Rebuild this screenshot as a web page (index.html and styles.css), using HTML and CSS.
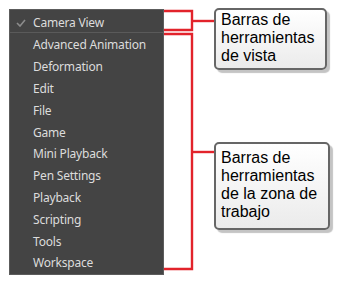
FILE: index.html
```html
<!DOCTYPE html>
<html lang="es">
<head>
  <meta charset="UTF-8">
  <title>Barras de herramientas</title>
  <link rel="stylesheet" href="styles.css">
</head>
<body>

<div class="figure">
  <div class="menu">
    <div class="item checked">
      <svg class="check" width="10" height="8" viewBox="0 0 10 8">
        <polyline points="1,4 4,7 9,1" />
      </svg>
      Camera View
    </div>
    <div class="item">Advanced Animation</div>
    <div class="item">Deformation</div>
    <div class="item">Edit</div>
    <div class="item">File</div>
    <div class="item">Game</div>
    <div class="item">Mini Playback</div>
    <div class="item">Pen Settings</div>
    <div class="item">Playback</div>
    <div class="item">Scripting</div>
    <div class="item">Tools</div>
    <div class="item">Workspace</div>
  </div>

  <!-- corchetes rojos entre el menú y las notas -->
  <svg class="links" width="50" height="270" viewBox="0 0 50 270">
    <path d="M0 3 H28 V22 H0" />
    <path d="M28 13 H50" />
    <path d="M0 26 H28 V261 H0" />
    <path d="M28 144 H50" />
  </svg>

  <div class="notes">
    <div class="note note-view">Barras de herramientas de vista</div>
    <div class="note note-work">Barras de herramientas de la zona de trabajo</div>
  </div>
</div>

</body>
</html>
```

FILE: styles.css
```css
body {
  margin: 0;
  background: #fff;
}

.figure {
  display: flex;
  align-items: flex-start;
  padding: 8px 0 0 9px;
}

.menu {
  box-sizing: border-box;
  width: 155px;
  height: 266px;
  margin-top: 1px;
  background: #444444;
  border: 1px solid #5c5c5c;
  font-family: 'Noto Sans', sans-serif;
  font-size: 12px;
  letter-spacing: -0.2px;
  color: #dcdcdc;
}

.item {
  position: relative;
  display: flex;
  align-items: center;
  box-sizing: border-box;
  height: 21.8px;
  padding: 2px 0 0 23px;
}

.item.checked {
  height: 23px;
  border-bottom: 1px solid #5a5a5a;
}

.check {
  position: absolute;
  left: 6px;
  top: 9px;
}

.check polyline {
  fill: none;
  stroke: #8c8c8c;
  stroke-width: 1.6;
}

.links path {
  fill: none;
  stroke: #e2232b;
  stroke-width: 2.4;
}

.notes {
  display: flex;
  flex-direction: column;
  gap: 72px;
}

.note {
  box-sizing: border-box;
  border: 2px solid #666;
  border-radius: 5px;
  background: linear-gradient(#ffffff, #ebebeb);
  box-shadow: 3px 3px 1px #c4c4c4;
  font-family: 'Liberation Sans', Arial, sans-serif;
  font-size: 16px;
  line-height: 18px;
  color: #000;
}

.note-view {
  width: 113px;
  height: 62px;
  padding: 1px 6px 0 5px;
}

.note-work {
  width: 116px;
  height: 88px;
  padding: 5px 6px 0 5px;
}
```
